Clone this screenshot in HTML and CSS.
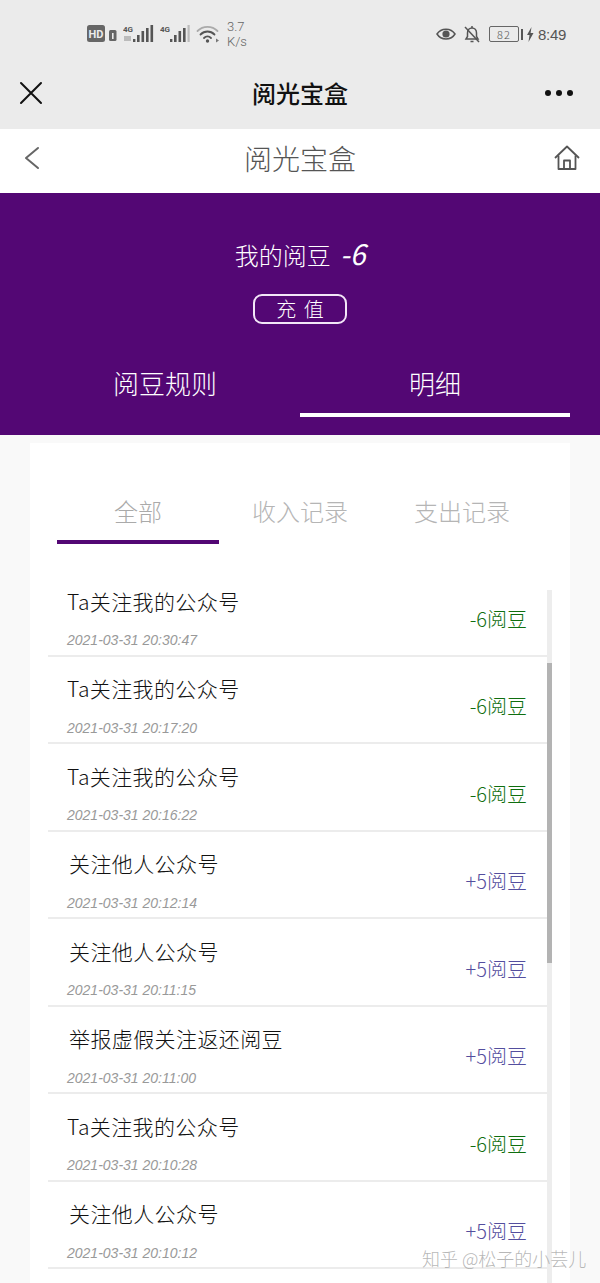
FILE: index.html

```html
<!DOCTYPE html>
<html lang="zh-CN">
<head>
  <meta charset="UTF-8">
  <meta name="viewport" content="width=device-width, initial-scale=1.0">
  <link rel="stylesheet" href="styles.css">
  <title>阅光宝盒</title>
</head>
<body>

<div class="top-grey">
  <div class="status-bar">
    <div class="status-left">
      <svg class="icon-hd" width="30" height="18" viewBox="0 0 30 18">
        <rect x="0" y="0" width="18" height="17" rx="2.5" fill="#666"/>
        <text x="9" y="12.5" text-anchor="middle" class="hd-text">HD</text>
        <rect x="22" y="5" width="7.5" height="11" rx="1.5" fill="#666"/>
        <rect x="25" y="8" width="1.6" height="6" fill="#ebebeb"/>
      </svg>
      <svg class="icon-signal" width="31" height="20" viewBox="0 0 31 20">
        <text x="0" y="8" class="sig-text">4G</text>
        <rect x="1" y="12" width="7" height="5" fill="#bbb"/>
        <rect x="10" y="15" width="2.4" height="3" fill="#555"/>
        <rect x="14" y="11" width="2.6" height="7" fill="#555"/>
        <rect x="18.5" y="7" width="2.6" height="11" fill="#555"/>
        <rect x="23" y="4" width="2.6" height="14" fill="#555"/>
        <rect x="27.5" y="1" width="2.6" height="17" fill="#555"/>
      </svg>
      <svg class="icon-signal" width="30" height="20" viewBox="0 0 30 20">
        <text x="0" y="8" class="sig-text">4G</text>
        <rect x="10" y="15" width="2.4" height="3" fill="#555"/>
        <rect x="14" y="11" width="2.6" height="7" fill="#555"/>
        <rect x="18.5" y="7" width="2.6" height="11" fill="#555"/>
        <rect x="23" y="4" width="2.6" height="14" fill="#555"/>
        <rect x="27.5" y="1" width="2.2" height="17" fill="#bbb"/>
      </svg>
      <svg class="icon-wifi" width="24" height="20" viewBox="0 0 24 20" fill="none" stroke-linecap="round">
        <path d="M1.5 7 C7 1.5 16 1.5 21.5 7" stroke="#aaa" stroke-width="1.8"/>
        <path d="M4.5 10.5 C8.5 6.5 14.5 6.5 18.5 10.5" stroke="#555" stroke-width="1.8"/>
        <path d="M8 14 C10 12 13 12 15 14" stroke="#555" stroke-width="1.8"/>
        <circle cx="11.5" cy="17" r="1.7" fill="#555"/>
        <path d="M20 14.5 L23 16.5 L20 18.5 Z" fill="#777"/>
      </svg>
      <div class="net-speed">3.7<br>K/s</div>
    </div>
    <div class="status-right">
      <svg width="20" height="16" viewBox="0 0 20 16" fill="none">
        <path d="M1 8 C5 1.5 15 1.5 19 8 C15 14.5 5 14.5 1 8 Z" stroke="#555" stroke-width="1.5"/>
        <circle cx="10" cy="8" r="3.6" fill="#555"/>
      </svg>
      <svg class="icon-bell" width="18" height="19" viewBox="0 0 18 19" fill="none" stroke="#555" stroke-width="1.5">
        <path d="M3 14 L4.5 11.5 V8 C4.5 5 6.5 3 9 3 C11.5 3 13.5 5 13.5 8 V11.5 L15 14 Z"/>
        <path d="M9 1 V3 M7.5 16.5 H10.5"/>
        <path d="M2 2 L16 17"/>
      </svg>
      <div class="battery"><span class="battery-num">82</span></div>
      <div class="battery-tip"></div>
      <svg class="icon-bolt" width="8" height="15" viewBox="0 0 8 15"><path d="M5.5 0 L1 8 H3.5 L2.5 15 L7.5 6 H4.6 Z" fill="#555"/></svg>
      <div class="status-time">8:49</div>
    </div>
  </div>

  <div class="wx-bar">
    <svg width="24" height="24" viewBox="0 0 24 24" fill="none" stroke="#111" stroke-width="2" stroke-linecap="round"><path d="M2 2 L22 22 M22 2 L2 22"/></svg>
    <div class="wx-title">阅光宝盒</div>
    <div class="wx-more"><span></span><span></span><span></span></div>
  </div>
</div>

<div class="page-header">
  <svg width="16" height="24" viewBox="0 0 16 24" fill="none" stroke="#666" stroke-width="2" stroke-linecap="round" stroke-linejoin="round"><path d="M14 2 L2 12 L14 22"/></svg>
  <div class="page-title">阅光宝盒</div>
  <svg width="26" height="26" viewBox="0 0 26 26" fill="none" stroke="#555" stroke-width="1.8" stroke-linejoin="round"><path d="M1 13 L13 1.5 L25 13"/><path d="M4.5 10.5 V24 H21.5 V10.5"/><path d="M10 24 V15.5 H16 V24"/></svg>
</div>

<div class="purple-panel">
  <div class="balance">我的阅豆 <span class="balance-num">-6</span></div>
  <div class="recharge-btn">充 值</div>
  <div class="main-tabs">
    <div class="main-tab">阅豆规则</div>
    <div class="main-tab main-tab-active">明细</div>
  </div>
</div>

<div class="content-card">
  <div class="sub-tabs">
    <div class="sub-tab sub-tab-active">全部</div>
    <div class="sub-tab">收入记录</div>
    <div class="sub-tab">支出记录</div>
  </div>

  <div class="record-scroll">
    <div class="record-list">
      <div class="record">
        <div><div class="record-name record-name-ta">Ta关注我的公众号</div><div class="record-time">2021-03-31 20:30:47</div></div>
        <div class="record-amount amount-out">-6阅豆</div>
      </div>
      <div class="record">
        <div><div class="record-name record-name-ta">Ta关注我的公众号</div><div class="record-time">2021-03-31 20:17:20</div></div>
        <div class="record-amount amount-out">-6阅豆</div>
      </div>
      <div class="record">
        <div><div class="record-name record-name-ta">Ta关注我的公众号</div><div class="record-time">2021-03-31 20:16:22</div></div>
        <div class="record-amount amount-out">-6阅豆</div>
      </div>
      <div class="record">
        <div><div class="record-name">关注他人公众号</div><div class="record-time">2021-03-31 20:12:14</div></div>
        <div class="record-amount amount-in">+5阅豆</div>
      </div>
      <div class="record">
        <div><div class="record-name">关注他人公众号</div><div class="record-time">2021-03-31 20:11:15</div></div>
        <div class="record-amount amount-in">+5阅豆</div>
      </div>
      <div class="record">
        <div><div class="record-name">举报虚假关注返还阅豆</div><div class="record-time">2021-03-31 20:11:00</div></div>
        <div class="record-amount amount-in">+5阅豆</div>
      </div>
      <div class="record">
        <div><div class="record-name record-name-ta">Ta关注我的公众号</div><div class="record-time">2021-03-31 20:10:28</div></div>
        <div class="record-amount amount-out">-6阅豆</div>
      </div>
      <div class="record">
        <div><div class="record-name">关注他人公众号</div><div class="record-time">2021-03-31 20:10:12</div></div>
        <div class="record-amount amount-in">+5阅豆</div>
      </div>
    </div>
    <div class="scroll-track"><div class="scroll-thumb"></div></div>
  </div>
</div>

<div class="watermark">知乎 @松子的小芸儿</div>

</body>
</html>
```

FILE: styles.css

```css
* {
  box-sizing: border-box;
}

html, body {
  height: 1283px;
  overflow: hidden;
}

body {
  margin: 0;
  position: relative;
  font-family: "Noto Sans CJK SC", "Noto Sans", sans-serif;
  font-weight: 300;
  background-color: #f9f9f9;
}

.top-grey {
  height: 129px;
  background-color: #ebebeb;
}

.status-bar {
  height: 68px;
  padding: 0 34px 0 87px;
  display: flex;
  align-items: center;
  justify-content: space-between;
}

.status-left, .status-right {
  display: flex;
  align-items: center;
}

.status-left {
  gap: 6px;
}

.hd-text {
  font-family: Roboto, sans-serif;
  font-size: 11px;
  font-weight: 700;
  fill: #ebebeb;
}

.sig-text {
  font-family: Roboto, sans-serif;
  font-size: 8px;
  font-weight: 700;
  fill: #555;
}

.net-speed {
  font-family: Roboto, sans-serif;
  font-size: 13px;
  line-height: 15px;
  color: #666;
  margin-left: 1px;
}

.status-right svg {
  flex: none;
}

.icon-bell {
  margin-left: 7px;
}

.battery {
  width: 30px;
  height: 16px;
  margin-left: 8px;
  border: 1px solid #666;
  border-radius: 2px;
  display: flex;
  align-items: center;
  justify-content: center;
}

.battery-num {
  font-size: 11px;
  line-height: 14px;
  letter-spacing: 1px;
  color: #555;
}

.battery-tip {
  width: 2px;
  height: 11px;
  margin-left: 2px;
  background-color: #555;
}

.icon-bolt {
  margin-left: 3px;
}

.status-time {
  font-family: "Liberation Sans", sans-serif;
  font-size: 15px;
  color: #555;
  margin-left: 4px;
  letter-spacing: -0.3px;
}

.wx-bar {
  height: 61px;
  padding: 0 27px 12px 19px;
  display: flex;
  align-items: center;
  justify-content: space-between;
}

.wx-title {
  margin-left: 12px;
  font-size: 24px;
  font-weight: 500;
  line-height: 34px;
  color: #111;
}

.wx-more {
  display: flex;
  gap: 5px;
}

.wx-more span {
  width: 6px;
  height: 6px;
  border-radius: 50%;
  background-color: #111;
}

.page-header {
  height: 64px;
  padding: 0 20px 6px 24px;
  background-color: #fff;
  display: flex;
  align-items: center;
  justify-content: space-between;
}

.page-title {
  margin-left: 6px;
  font-size: 28px;
  line-height: 40px;
  color: #555;
}

.purple-panel {
  height: 242px;
  padding-top: 42px;
  background-color: #530774;
  color: #fff;
  display: flex;
  flex-direction: column;
  align-items: center;
}

.balance {
  font-size: 24px;
  line-height: 36px;
}

.balance-num {
  font-size: 28px;
  font-style: italic;
  font-weight: 400;
  margin-left: 4px;
}

.recharge-btn {
  width: 94px;
  height: 30px;
  margin-top: 21px;
  border: 2px solid #f3e6f8;
  border-radius: 9px;
  font-size: 20px;
  line-height: 25px;
  text-align: center;
  word-spacing: 3px;
}

.main-tabs {
  width: 540px;
  margin-top: 40px;
  align-self: flex-start;
  margin-left: 30px;
  display: flex;
}

.main-tab {
  flex: 1;
  height: 53px;
  font-size: 26px;
  line-height: 38px;
  text-align: center;
}

.main-tab-active {
  border-bottom: 4px solid #fff;
}

.content-card {
  width: 540px;
  height: 840px;
  margin: 8px 0 0 30px;
  padding-top: 49px;
  background-color: #fff;
}

.sub-tabs {
  margin: 0 27px;
  display: flex;
}

.sub-tab {
  width: 162px;
  height: 52px;
  font-size: 24px;
  line-height: 38px;
  text-align: center;
  color: #b5b5b5;
}

.sub-tab-active {
  color: #aaa;
  border-bottom: 4px solid #530774;
}

.record-scroll {
  margin: 46px 18px 0;
  height: 693px;
  display: flex;
}

/* list is scrolled a little, first row starts above the track */
.record-list {
  flex: 1;
  margin-top: -21px;
}

.record {
  height: 87.5px;
  padding: 12px 20px 0 21px;
  border-bottom: 2px solid #ececec;
  display: flex;
  align-items: center;
  justify-content: space-between;
}

.record-name {
  font-size: 21px;
  line-height: 28px;
  letter-spacing: 0.4px;
  color: #111;
}

.record-name-ta {
  margin-left: -2px;
}

.record-time {
  margin: 17.5px 0 0 -2px;
  font-family: "Liberation Sans", sans-serif;
  font-size: 14px;
  font-style: italic;
  line-height: 17px;
  color: #999;
}

.record-amount {
  margin-top: 2px;
  font-size: 20px;
  line-height: 28px;
}

.amount-out {
  color: #0f6e0f;
}

.amount-in {
  color: #544e9e;
}

.scroll-track {
  width: 5px;
  height: 100%;
  padding-top: 73px;
  background-color: #ededed;
}

.scroll-thumb {
  height: 300px;
  background-color: #b3b3b3;
}

.watermark {
  position: absolute;
  left: 422px;
  top: 1246px;
  font-size: 18px;
  line-height: 24px;
  color: rgba(170, 170, 170, 0.85);
  white-space: nowrap;
}
```
